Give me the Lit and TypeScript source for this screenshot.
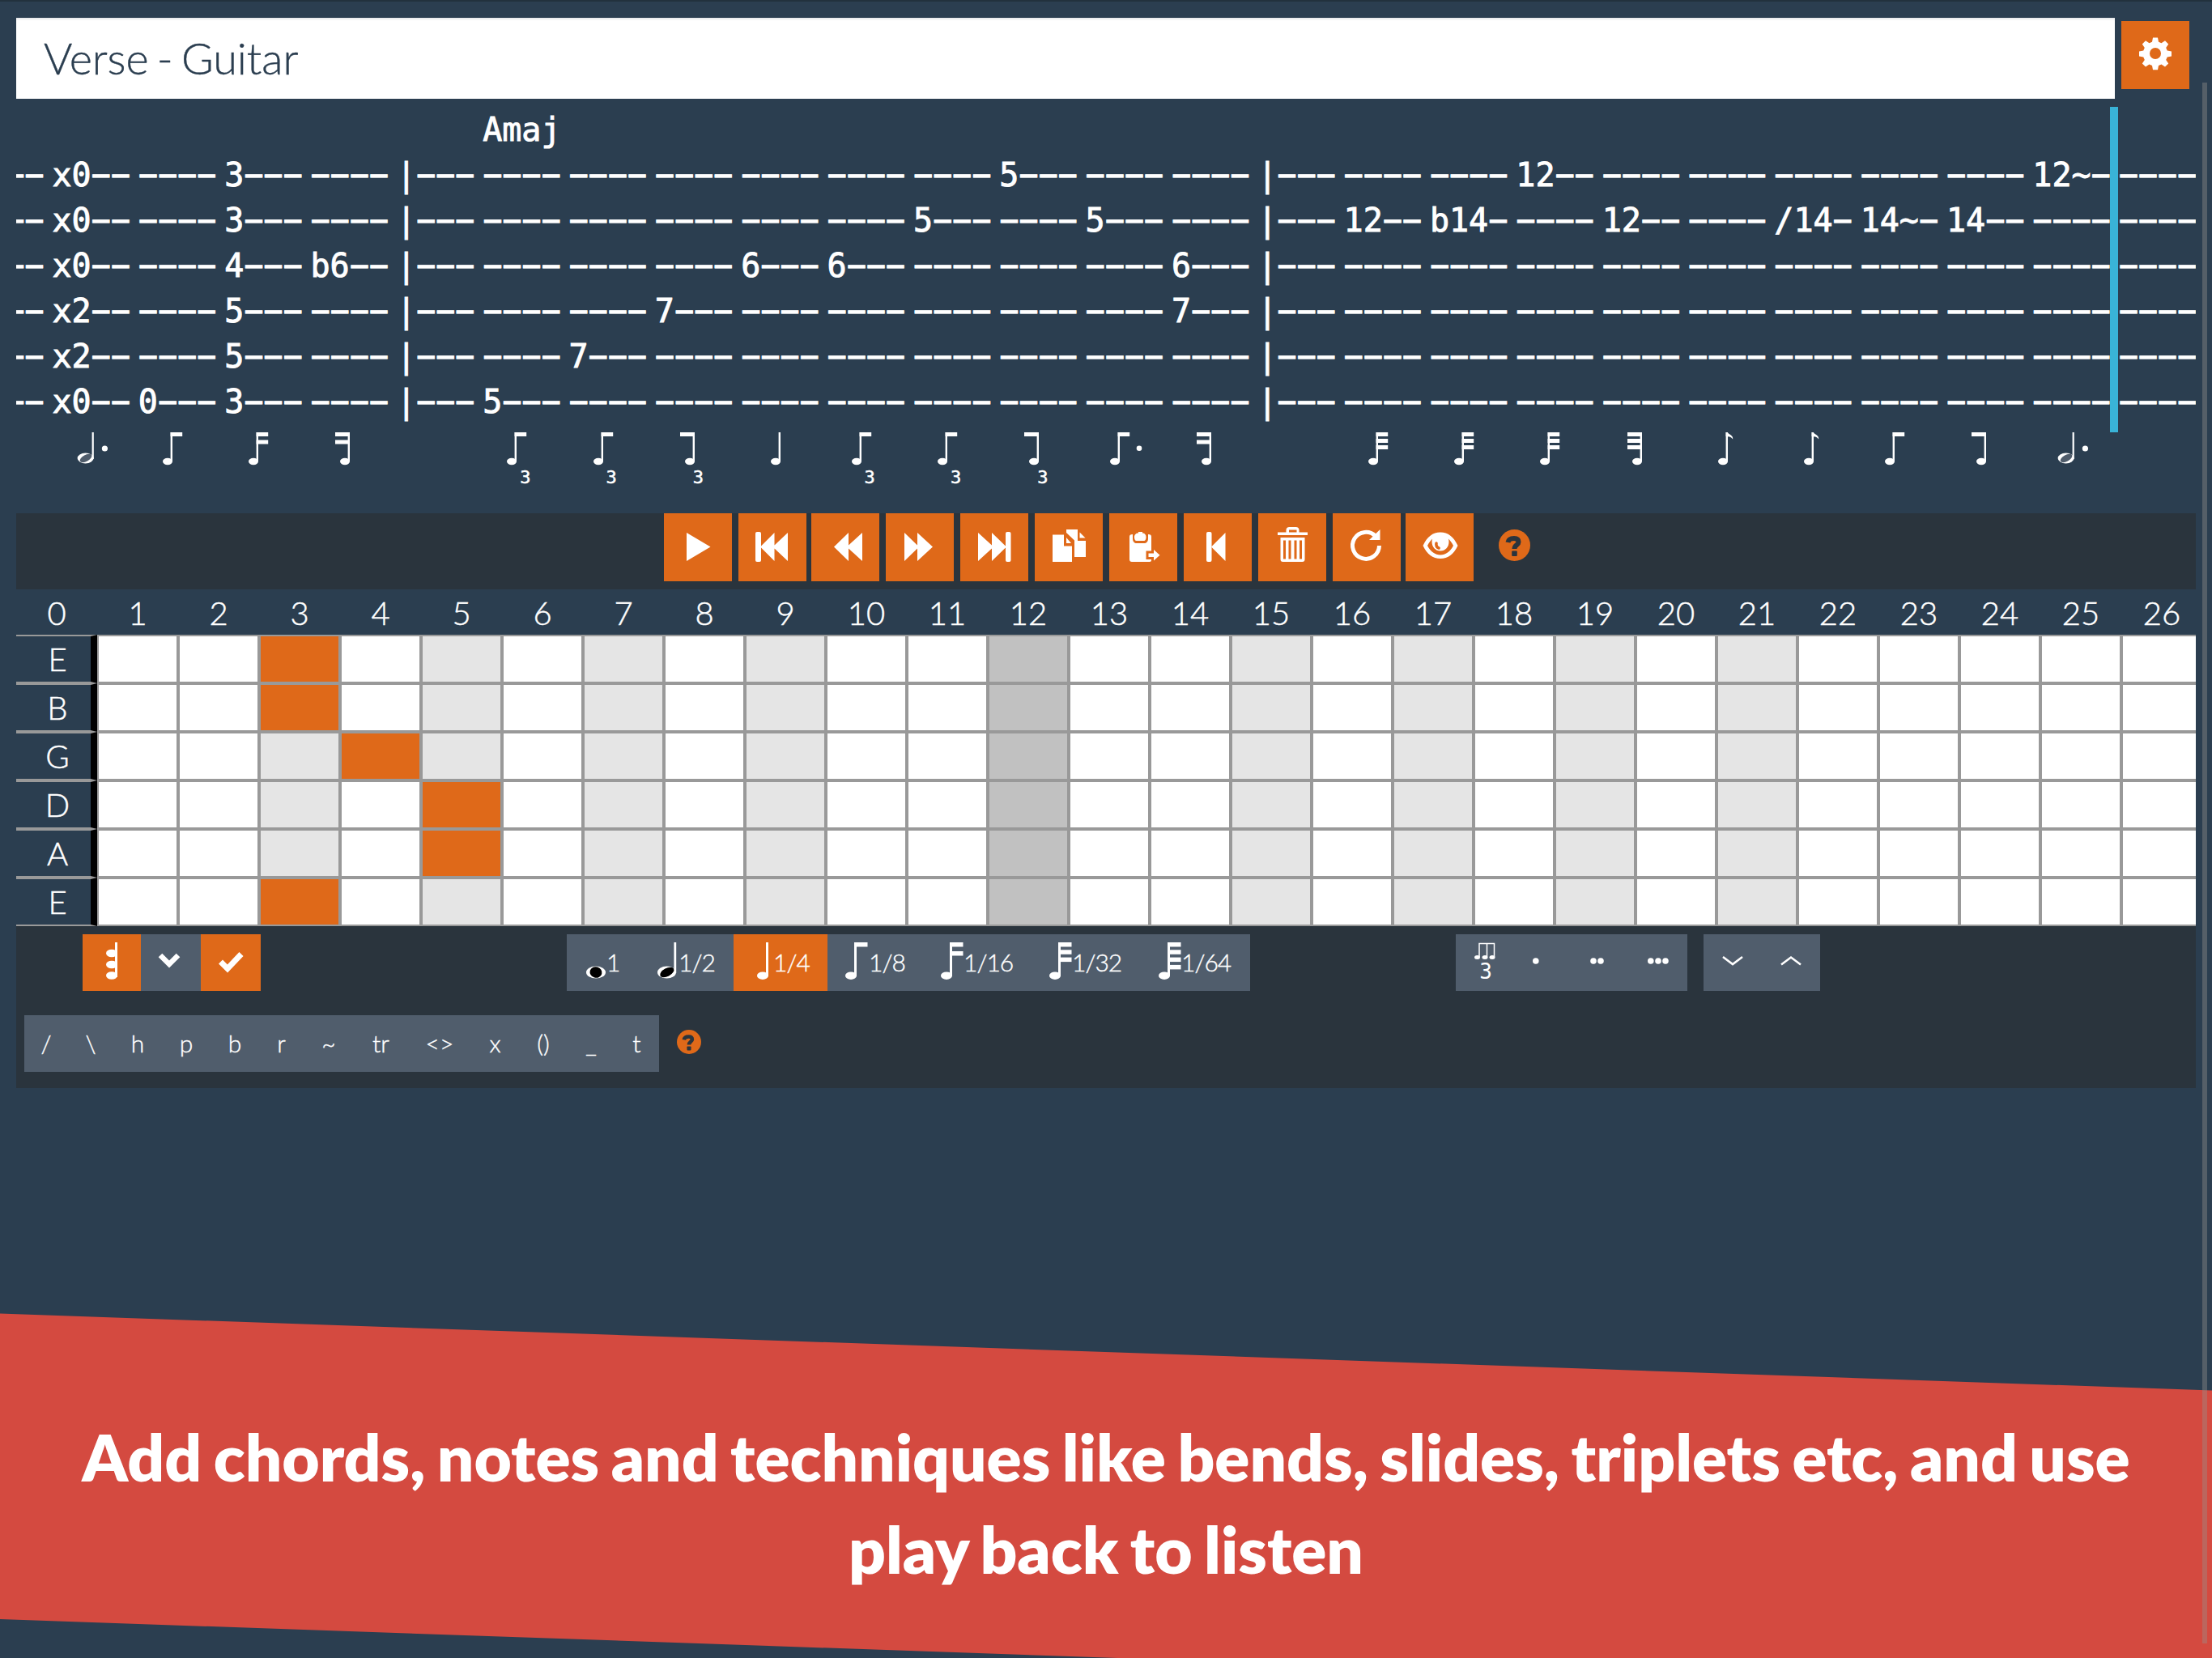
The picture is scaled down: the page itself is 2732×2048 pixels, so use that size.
import { LitElement, html, css, svg, nothing } from 'lit';
import { customElement } from 'lit/decorators.js';
import { classMap } from 'lit/directives/class-map.js';

type Head = 'whole' | 'half' | 'full';

interface NoteSpec {
  head: Head;
  // number of beams, negative when they point left
  beams?: number;
  flag?: boolean;
  dot?: boolean;
  triplet?: boolean;
}

interface TabColumn {
  chord?: string;
  strings?: Record<number, string>;
  bar?: boolean;
  note?: NoteSpec;
}

const full = (beams = 0, extra: Partial<NoteSpec> = {}): NoteSpec => ({ head: 'full', beams, ...extra });

const COLUMNS: TabColumn[] = [
  {},
  { strings: { 0: 'x0', 1: 'x0', 2: 'x0', 3: 'x2', 4: 'x2', 5: 'x0' }, note: { head: 'half', dot: true } },
  { strings: { 5: '0' }, note: full(1) },
  { strings: { 0: '3', 1: '3', 2: '4', 3: '5', 4: '5', 5: '3' }, note: full(2) },
  { strings: { 2: 'b6' }, note: full(-2) },
  { bar: true },
  { chord: 'Amaj', strings: { 5: '5' }, note: full(1, { triplet: true }) },
  { strings: { 4: '7' }, note: full(1, { triplet: true }) },
  { strings: { 3: '7' }, note: full(-1, { triplet: true }) },
  { strings: { 2: '6' }, note: full() },
  { strings: { 2: '6' }, note: full(1, { triplet: true }) },
  { strings: { 1: '5' }, note: full(1, { triplet: true }) },
  { strings: { 0: '5' }, note: full(-1, { triplet: true }) },
  { strings: { 1: '5' }, note: full(1, { dot: true }) },
  { strings: { 2: '6', 3: '7' }, note: full(-2) },
  { bar: true },
  { strings: { 1: '12' }, note: full(3) },
  { strings: { 1: 'b14' }, note: full(3) },
  { strings: { 0: '12' }, note: full(3) },
  { strings: { 1: '12' }, note: full(-3) },
  { note: full(0, { flag: true }) },
  { strings: { 1: '/14' }, note: full(0, { flag: true }) },
  { strings: { 1: '14~' }, note: full(1) },
  { strings: { 1: '14' }, note: full(-1) },
  { strings: { 0: '12~' }, note: { head: 'half', dot: true } },
  {},
];

const TUNING = ['E', 'B', 'G', 'D', 'A', 'E'];
const FRETS = Array.from({ length: 27 }, (_, i) => i);
const MARKED = [3, 5, 7, 9, 15, 17, 19, 21];
const PRESSED = [3, 3, 4, 5, 5, 3];
const TECHNIQUES: [string, number][] = [
  ['/', 54], ['\\', 56], ['h', 60], ['p', 60], ['b', 60], ['r', 55], ['~', 62],
  ['tr', 67], ['<>', 78], ['x', 59], ['()', 60], ['_', 58], ['t', 55],
];

const tabNote = (n: NoteSpec) => {
  if (n.head === 'half') {
    return svg`
      <rect x="49.6" y="0" width="2.2" height="33" fill="#fff"/>
      <ellipse cx="41.6" cy="32" rx="10" ry="6.5" fill="#fff"/>
      <ellipse cx="42" cy="32" rx="8" ry="4" transform="rotate(-28 42 32)" fill="#505d6c"/>
      <circle cx="65.4" cy="20" r="3.6" fill="#fff"/>`;
  }
  const beams = n.beams ?? 0;
  const left = beams > 0 ? 30 : 37;
  const stem = left + 9.6;
  return svg`
    <g fill="#fff">
      <ellipse cx=${left + 6} cy="36" rx="6" ry="4.2"/>
      <rect x=${stem} y="0" width="2.4" height="36"/>
      ${Array.from({ length: Math.abs(beams) }, (_, i) => svg`
        <rect x=${beams > 0 ? stem : 31} y=${i * (Math.abs(beams) === 2 ? 9.5 : 8)}
          width=${beams > 0 ? 14.6 : stem - 29} height="5"/>`)}
      ${n.flag ? svg`<path d=${`M${stem} 0h2.2c1 3 7 3 6.4 8.5l-2-2-2-1-4.6-.5z`}/>` : nothing}
      ${n.dot ? svg`<circle cx="66" cy="19.8" r="3.3"/>` : nothing}
    </g>`;
};

interface Duration {
  label: string;
  head: Head;
  beams: number;
  width: number;
  pad: number;
  gap: number;
  active?: boolean;
}

const DURATIONS: Duration[] = [
  { label: '1', head: 'whole', beams: 0, width: 88, pad: 24, gap: 1 },
  { label: '1/2', head: 'half', beams: 0, width: 118, pad: 24, gap: 2 },
  { label: '1/4', head: 'full', beams: 0, width: 116, pad: 29, gap: 6, active: true },
  { label: '1/8', head: 'full', beams: 1, width: 118, pad: 22, gap: 1 },
  { label: '1/16', head: 'full', beams: 2, width: 134, pad: 22, gap: 0 },
  { label: '1/32', head: 'full', beams: 3, width: 135, pad: 22, gap: 0 },
  { label: '1/64', head: 'full', beams: 4, width: 135, pad: 22, gap: 0 },
];

const durationNote = (d: Duration) => {
  if (d.head === 'whole') {
    return html`<svg class="dur-icon" width="24" height="46" viewBox="0 0 24 46">
      <ellipse cx="12" cy="37" rx="12" ry="7.5" fill="#fff"/>
      <ellipse cx="12" cy="37" rx="7.5" ry="6.8" transform="rotate(15 12 37)" fill="#000"/>
    </svg>`;
  }
  if (d.head === 'half') {
    return html`<svg class="dur-icon" width="24" height="46" viewBox="0 0 24 46">
      <rect x="20.4" y="0" width="2.8" height="38" fill="#fff"/>
      <ellipse cx="11.5" cy="37" rx="11.5" ry="7.5" fill="#fff"/>
      <ellipse cx="11.8" cy="37" rx="9.4" ry="5" transform="rotate(-28 11.8 37)" fill="#000"/>
    </svg>`;
  }
  const w = d.beams ? 28 : 14;
  return html`<svg class="dur-icon" width=${w} height="46" viewBox="0 0 ${w} 46">
    <g fill="#fff">
      <ellipse cx="7" cy="41.2" rx="7" ry="4.8"/>
      <rect x="11" y="0" width="3" height="41"/>
      ${Array.from({ length: d.beams }, (_, i) => svg`
        <rect x="11" y=${i * (d.beams === 2 ? 11 : 9.3)} width="16.5" height="5.5"/>`)}
    </g>
  </svg>`;
};

const ICONS = {
  play: svg`<path d="M28 24l29.5 17.5L28 59z"/>`,
  first: svg`<rect x="21" y="23" width="7" height="37" rx="2"/><path d="M44.5 24v15.5L61 24v35L44.5 43.5V59L27 41.5z"/>`,
  rewind: svg`<path d="M46 24v15.5L63 24v35L46 43.5V59L28 41.5z"/>`,
  forward: svg`<path d="M39 24v15.5L23 24v35l16-15.5V59l19-17.5z"/>`,
  last: svg`<path d="M39 24v15.5L22 24v35l17-15.5V59l18-17.5z"/><rect x="56" y="23" width="6.5" height="37" rx="2"/>`,
  copy: svg`<path d="M22 26.5h14v14h10V60H22z"/><path d="M39 30v7h6z"/><path d="M39 20h14v14h10v20H49V33.5l-10-9.5z"/><path d="M55.5 23.5v7h7z"/>`,
  paste: svg`<path d="M25 29c0-1.8 1-3 4-3v5c0 4 2 6 5 6h9c3 0 5-2 5-6v-5c3 0 4 1.2 4 3v17.5h-6.5V57H52v1c0 1.3-.7 2-2 2H28c-2 0-3-1-3-3z"/>
    <path d="M36 23h5v1.5c3 0 4.5 2 4.5 5 0 2.5-1 4.5-2.5 4.5h-9.5c-1.5 0-2.5-2-2.5-4.5 0-3 2-5 5-5z"/>
    <path d="M48.5 49.5H55V45l7.5 6.8L55 58.5V54h-6.5z"/>`,
  start: svg`<rect x="28" y="23" width="6.5" height="37" rx="2"/><path d="M51.5 24v35L34 41.5z"/>`,
  trash: svg`<path fill-rule="evenodd" d="M24 23.5h10.5V21c0-2.5 1.5-4 4-4h8c2.5 0 4 1.5 4 4v2.5h10.5V27H24zM38 23.5h9.5V20.5H38z"/>
    <path fill-rule="evenodd" d="M27.5 30h30v27c0 2-1 3-3 3H30.5c-2 0-3-1-3-3zM31 33.5v23h3v-23zm6.5 0v23h3v-23zm7 0v23h3v-23zm6.5 0v23h3v-23z"/>`,
  redo: svg`<path fill="none" stroke="#fff" stroke-width="5" d="M57.5 40A16.5 16.5 0 1 1 53 28.5"/><path d="M58.5 20v13H45z"/>`,
  eye: svg`<path fill-rule="evenodd" d="M21.5 40c5-11 12-16.5 21.5-16.5S59.5 29 64.5 40C59.5 50.5 52.5 56 43 56S26.5 50.5 21.5 40zM27 40c4 7.5 9.5 11.5 16 11.5S55 47.5 59 40c-1.8-3.5-3.5-6-6-8.5 2 8-2.5 15-10 15s-12-7-10-15c-2.5 2.5-4.2 5-6 8.5z"/>
    <path fill="none" stroke="#df6919" stroke-width="3.6" stroke-linecap="round" d="M38 37c-.5 3 .5 5 3 6"/>`,
  gear: svg`<path fill-rule="evenodd" d="M39 20.5h6l1 5.2 3.5 1.5 4.5-3 4.2 4.2-3 4.5 1.5 3.5 5.3 1v6l-5.3 1-1.5 3.5 3 4.5-4.2 4.2-4.5-3-3.5 1.5-1 5.2h-6l-1-5.2-3.5-1.5-4.5 3-4.2-4.2 3-4.5-1.5-3.5-5.3-1v-6l5.3-1 1.5-3.5-3-4.5 4.2-4.2 4.5 3 3.5-1.5zM42 33a7 7 0 1 0 0 14 7 7 0 0 0 0-14z"/>`,
};

const TOOLS: (keyof typeof ICONS)[][] = [
  ['play', 'first'],
  ['rewind', 'forward', 'last', 'copy', 'paste', 'start', 'trash', 'redo'],
  ['eye'],
];

@customElement('app-icon-button')
export class AppIconButton extends LitElement {
  static properties = {
    name: { type: String },
  };

  declare name: keyof typeof ICONS;

  static styles = css`
    :host {
      display: block;
      width: 84px;
      height: 84px;
      background: #df6919;
    }

    svg {
      display: block;
      fill: #fff;
    }
  `;

  render() {
    return html`<svg width="84" height="84" viewBox="0 0 84 84">${ICONS[this.name]}</svg>`;
  }
}

@customElement('app-help')
export class AppHelp extends LitElement {
  static properties = {
    size: { type: Number },
  };

  declare size: number;

  static styles = css`
    :host,
    svg {
      display: block;
    }
  `;

  render() {
    return html`<svg width=${this.size} height=${this.size} viewBox="0 0 39 39">
      <circle cx="19.5" cy="19.5" r="19.5" fill="#df6919"/>
      <path fill="none" stroke="#2a343d" stroke-width="6" d="M11.5 16c.5-3.5 3.5-5 7.5-5s5.5 2 5.5 4.5c0 4-5 3.5-5 8.5"/>
      <rect x="16.2" y="26.5" width="6.6" height="6.5" rx="1" fill="#2a343d"/>
    </svg>`;
  }
}

@customElement('app-tab')
export class AppTab extends LitElement {
  static styles = css`
    :host {
      display: block;
      position: relative;
      height: 502px;
      margin-right: 20px;
    }

    .columns {
      display: flex;
      overflow: hidden;
      height: 100%;
      font-family: 'DejaVu Sans Mono', 'Liberation Mono', monospace;
      font-size: 40px;
      line-height: 56px;
      color: #fff;
      -webkit-text-stroke: 0.9px #fff;
    }

    .column {
      flex: none;
      width: 106.35px;
    }

    .column:first-child {
      margin-left: -61.9px;
    }

    .cell {
      height: 56px;
      white-space: nowrap;
    }

    .note {
      display: block;
      margin-top: 10px;
    }

    .triplet {
      font-size: 22px;
      line-height: 26px;
      padding-left: 46px;
      -webkit-text-stroke-width: 0.5px;
    }

    .triplet.last {
      padding-left: 47px;
    }

    .cursor {
      position: absolute;
      left: 2586px;
      top: 0;
      width: 10px;
      height: 402px;
      background: #39b3d7;
    }
  `;

  renderString(col: TabColumn, i: number) {
    const text = col.bar ? '|' : col.strings?.[i] ?? '';
    return html`<div class="cell">${text.padEnd(4, '−')}</div>`;
  }

  render() {
    return html`
      <div class="columns">
        ${COLUMNS.map((col) => html`
          <div class="column">
            <div class="cell">${col.chord ?? ''}</div>
            ${TUNING.map((_, i) => this.renderString(col, i))}
            <svg class="note" width="96" height="43" viewBox="0 0 96 43">
              ${col.note ? tabNote(col.note) : nothing}
            </svg>
            ${col.note?.triplet
              ? html`<div class=${classMap({ triplet: true, last: (col.note.beams ?? 0) < 0 })}>3</div>`
              : nothing}
          </div>
        `)}
      </div>
      <div class="cursor"></div>
    `;
  }
}

@customElement('app-fretboard')
export class AppFretboard extends LitElement {
  static styles = css`
    :host {
      display: block;
      margin-right: 20px;
      overflow: hidden;
      font-size: 40px;
      font-weight: 300;
      color: #fff;
      text-align: center;
      -webkit-text-stroke: 0.5px #fff;
    }

    .row {
      display: grid;
      grid-template-columns: repeat(27, 100px);
    }

    .number {
      height: 56px;
      line-height: 58px;
    }

    .string {
      box-sizing: border-box;
      height: 60px;
      line-height: 57px;
      padding-left: 10px;
      border: 2px solid #999;
      border-left: 0;
      border-right: 8px solid #000;
    }

    .fret {
      box-sizing: border-box;
      height: 60px;
      border: 2px solid #999;
      background: #fff;
    }

    .marked {
      background: #e5e5e5;
    }

    .octave {
      background: #c1c1c1;
    }

    .pressed {
      background: #df6919;
    }
  `;

  render() {
    return html`
      <div class="row">
        ${FRETS.map((n) => html`<div class="number">${n}</div>`)}
      </div>
      ${TUNING.map((name, s) => html`
        <div class="row">
          <div class="string">${name}</div>
          ${FRETS.slice(1).map((n) => html`
            <div class=${classMap({
              fret: true,
              marked: MARKED.includes(n),
              octave: n === 12,
              pressed: PRESSED[s] === n,
            })}></div>
          `)}
        </div>
      `)}
    `;
  }
}

@customElement('app-root')
export class AppRoot extends LitElement {
  static styles = css`
    :host {
      display: block;
      position: relative;
      box-sizing: border-box;
      width: 2732px;
      height: 2048px;
      padding: 20px 0 0 20px;
      overflow: hidden;
      border-top: 2px solid #22313d;
      background: #2b3e50;
      font-family: Lato, 'Liberation Sans', sans-serif;
      color: #fff;
    }

    .header {
      display: flex;
      gap: 8px;
      height: 110px;
    }

    .title {
      box-sizing: border-box;
      width: 2592px;
      height: 100px;
      padding-left: 34px;
      background: #fff;
      box-shadow: inset 0 3px 2px -1px #e8eaec;
      color: #2b3e50;
      font-size: 54px;
      font-weight: 300;
      line-height: 100px;
      word-spacing: -4.5px;
      -webkit-text-stroke: 0.4px #2b3e50;
    }

    .settings {
      margin-top: 4px;
    }

    .toolbar {
      display: flex;
      box-sizing: border-box;
      height: 94px;
      margin-right: 20px;
      padding-left: 800px;
      gap: 6px;
      background: #2a343d;
    }

    .tools {
      display: flex;
      gap: 8px;
    }

    .toolbar app-help {
      margin: 20px 0 0 25px;
    }

    .controls {
      box-sizing: border-box;
      height: 200px;
      margin-right: 20px;
      padding-top: 10px;
      background: #2a343d;
    }

    .line {
      display: flex;
      height: 70px;
      margin-bottom: 30px;
    }

    .group {
      display: flex;
      height: 70px;
      background: #505d6c;
    }

    .chord {
      margin-left: 82px;
    }

    .durations {
      margin-left: 378px;
    }

    .dots {
      margin-left: 254px;
    }

    .octaves {
      margin-left: 20px;
    }

    .button {
      display: flex;
      align-items: center;
      justify-content: center;
      box-sizing: border-box;
      height: 70px;
      padding-bottom: 2px;
      font-size: 30px;
      font-weight: 300;
      -webkit-text-stroke: 0.4px #fff;
    }

    .button svg {
      display: block;
      align-self: flex-start;
    }

    .active {
      background: #df6919;
    }

    .duration {
      justify-content: flex-start;
      letter-spacing: -1px;
    }

    .duration .dur-icon {
      margin-top: 10px;
    }

    .w72 {
      width: 72px;
    }

    .w74 {
      width: 74px;
    }

    .techniques {
      margin-left: 10px;
    }

    .line > app-help {
      margin: 18px 0 0 22px;
    }

    .banner {
      position: absolute;
      left: 0;
      top: 1620px;
      width: 2732px;
      height: 426px;
      box-sizing: border-box;
      padding: 120px 90px 0;
      background: #d44a40;
      clip-path: polygon(0 0.5px, 2732px 95.5px, 2732px 473px, 0 378px);
      font-size: 80px;
      font-weight: 800;
      line-height: 114px;
      word-spacing: -4px;
      text-align: center;
    }

    .scrollbar {
      position: absolute;
      right: 6px;
      top: 100px;
      width: 6px;
      height: 1928px;
      background: rgba(150, 145, 140, 0.4);
    }
  `;

  render() {
    return html`
      <div class="header">
        <div class="title">Verse - Guitar</div>
        <app-icon-button class="settings" name="gear"></app-icon-button>
      </div>
      <app-tab></app-tab>
      <div class="toolbar">
        ${TOOLS.map((group) => html`
          <div class="tools">
            ${group.map((name) => html`<app-icon-button name=${name}></app-icon-button>`)}
          </div>
        `)}
        <app-help size="39"></app-help>
      </div>
      <app-fretboard></app-fretboard>
      <div class="controls">
        <div class="line">
          <div class="group chord">
            <div class="button w72 active">
              <svg width="72" height="70" viewBox="0 0 72 70" fill="#fff">
                <rect x="40" y="10" width="3" height="43"/>
                <ellipse cx="36" cy="23.5" rx="7" ry="4.8"/>
                <ellipse cx="36" cy="37.5" rx="7" ry="4.8"/>
                <ellipse cx="36" cy="51" rx="7" ry="4.8"/>
              </svg>
            </div>
            <div class="button w74">
              <svg width="74" height="70" viewBox="0 0 74 70">
                <path fill="none" stroke="#fff" stroke-width="6.5" d="M24 26l11 11 11-11"/>
              </svg>
            </div>
            <div class="button w74 active">
              <svg width="74" height="70" viewBox="0 0 74 70">
                <path fill="none" stroke="#fff" stroke-width="7" d="M24.5 34l8.5 8.5L50 24.5"/>
              </svg>
            </div>
          </div>
          <div class="group durations">
            ${DURATIONS.map((d) => html`
              <div class=${classMap({ button: true, duration: true, active: !!d.active })}
                style="width:${d.width}px;padding-left:${d.pad}px;gap:${d.gap}px">
                ${durationNote(d)}<span>${d.label}</span>
              </div>
            `)}
          </div>
          <div class="group dots">
            <div class="button w72">
              <svg width="72" height="70" viewBox="0 0 72 70" fill="#fff">
                <path fill="none" stroke="#fff" stroke-width="1.5" d="M29 28V11.5h18.5V28M38.5 28V11.5"/>
                <ellipse cx="26.5" cy="28.5" rx="3.5" ry="2.5"/>
                <ellipse cx="36" cy="28.5" rx="3.5" ry="2.5"/>
                <ellipse cx="45" cy="28.5" rx="3.5" ry="2.5"/>
                <text x="37" y="54.5" font-size="26" text-anchor="middle" font-weight="400" font-family="DejaVu Sans Mono">3</text>
              </svg>
            </div>
            <svg width="214" height="70" viewBox="72 0 214 70" fill="#fff">
              <circle cx="98.8" cy="33" r="3.8"/>
              <circle cx="170" cy="33" r="3.8"/>
              <circle cx="179" cy="33" r="3.8"/>
              <circle cx="240.8" cy="33" r="3.8"/>
              <circle cx="250" cy="33" r="3.8"/>
              <circle cx="259" cy="33" r="3.8"/>
            </svg>
          </div>
          <div class="group octaves">
            <div class="button w72">
              <svg width="72" height="70" viewBox="0 0 72 70">
                <path fill="none" stroke="#fff" stroke-width="2.6" d="M24 28l12 9 12-9"/>
              </svg>
            </div>
            <div class="button w72">
              <svg width="72" height="70" viewBox="0 0 72 70">
                <path fill="none" stroke="#fff" stroke-width="2.6" d="M24 37.5l12-9 12 9"/>
              </svg>
            </div>
          </div>
        </div>
        <div class="line">
          <div class="group techniques">
            ${TECHNIQUES.map(([t, width]) => html`<div class="button" style="width:${width}px">${t}</div>`)}
          </div>
          <app-help size="30"></app-help>
        </div>
      </div>
      <div class="banner">
        Add chords, notes and techniques like bends, slides, triplets etc, and use play back to listen
      </div>
      <div class="scrollbar"></div>
    `;
  }
}
